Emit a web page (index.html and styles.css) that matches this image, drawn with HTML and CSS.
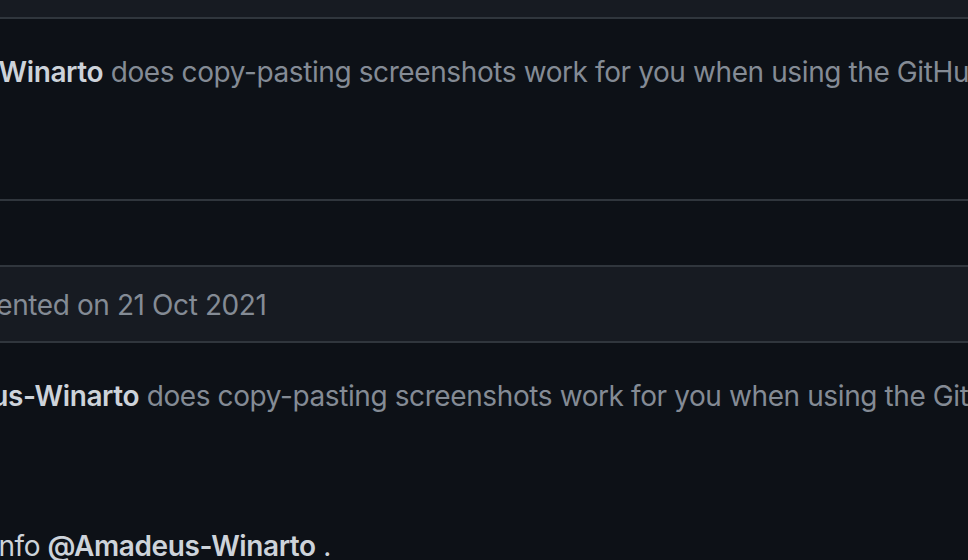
FILE: index.html
```html
<!DOCTYPE html>
<html lang="en">
<head>
<meta charset="utf-8">
<title>Comments</title>
<link rel="stylesheet" href="styles.css">
</head>
<body>
<div class="timeline">
  <div class="comment comment-first">
    <div class="comment-header header-top"></div>
    <div class="comment-body body-short">
      <p class="quote shift-a"><b class="mention">@Amadeus-Winarto</b> does copy-pasting screenshots work for you when using the GitHub mobile app?</p>
    </div>
  </div>
  <div class="comment comment-second">
    <div class="comment-header header-full">
      <span class="meta shift-c">commented on 21 Oct 2021</span>
    </div>
    <div class="comment-body">
      <p class="quote shift-b"><b class="mention">@Amadeus-Winarto</b> does copy-pasting screenshots work for you when using the GitHub mobile app?</p>
      <p class="reply shift-d">info <b class="mention">@Amadeus-Winarto</b> .</p>
    </div>
  </div>
</div>
</body>
</html>
```
FILE: styles.css
```css
html, body {
  margin: 0;
  padding: 0;
  background: #0d1117;
}
body {
  width: 968px;
  height: 560px;
  overflow: hidden;
  font-family: Inter, "Noto Sans", "Liberation Sans", sans-serif;
  font-size: 28px;
  line-height: 42px;
  letter-spacing: -0.4px;
  color: #848b95;
}
.timeline {
  display: flex;
  flex-direction: column;
  gap: 64px;
}
.comment {
  border-bottom: 2px solid #30363d;
}
.comment-second {
  border-top: 2px solid #30363d;
  border-bottom: none;
}
.comment-header {
  background: #171b22;
  border-bottom: 2px solid #30363d;
}
.header-top {
  height: 17px;
}
.header-full {
  height: 76px;
  box-sizing: border-box;
  padding-top: 17px;
  white-space: nowrap;
  overflow: hidden;
}
.comment-body {
  padding-top: 32px;
  overflow: hidden;
  white-space: nowrap;
}
.body-short {
  height: 180px;
  box-sizing: border-box;
}
.mention {
  font-weight: 600;
  color: #cdd3da;
}
.meta {
  display: inline-block;
}
.comment-body .quote,
.comment-body .reply {
  margin: 0;
}
.comment-body .shift-a { margin-left: -165px; }
.comment-body .shift-b { margin-left: -129px; }
.header-full .shift-c { margin-left: -84px; }
.comment-body .shift-d { margin-left: -8px; margin-top: 108px; }
.reply { color: #cdd3da; }
```
